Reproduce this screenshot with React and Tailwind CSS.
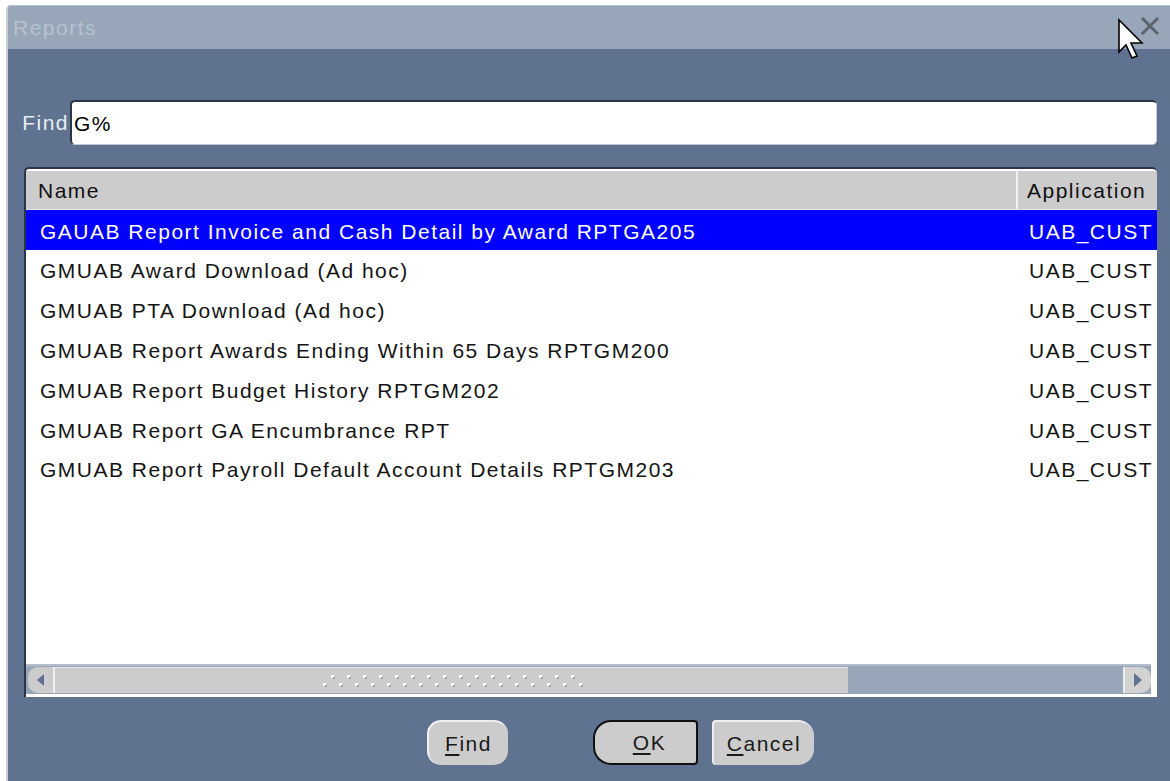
import React from "react";

const rows = [
  "GAUAB Report Invoice and Cash Detail by Award RPTGA205",
  "GMUAB Award Download (Ad hoc)",
  "GMUAB PTA Download (Ad hoc)",
  "GMUAB Report Awards Ending Within 65 Days RPTGM200",
  "GMUAB Report Budget History RPTGM202",
  "GMUAB Report GA Encumbrance RPT",
  "GMUAB Report Payroll Default Account Details RPTGM203",
];

function Grip() {
  // dotted grip drawn on the scrollbar thumb
  const top = Array.from({ length: 16 }, (_, i) => i);
  const bottom = Array.from({ length: 17 }, (_, i) => i);
  return (
    <svg width="270" height="16" viewBox="0 0 270 16">
      {top.map((i) => (
        <g key={"t" + i}>
          <rect x={8 + i * 16} y={2} width="3" height="3" fill="#ffffff" />
          <rect x={10 + i * 16} y={4} width="2" height="2" fill="#9aa3b0" />
        </g>
      ))}
      {bottom.map((i) => (
        <g key={"b" + i}>
          <rect x={0 + i * 16} y={10} width="3" height="3" fill="#ffffff" />
          <rect x={2 + i * 16} y={12} width="2" height="2" fill="#9aa3b0" />
        </g>
      ))}
    </svg>
  );
}

function Btn({ children, className = "" }) {
  return (
    <div
      className={
        "h-[45px] flex items-center justify-center bg-[#cccccc] text-[21px] tracking-[1.5px] text-[#1a1a1a] " +
        className
      }
    >
      {children}
    </div>
  );
}

export default function App() {
  return (
    <div className="relative w-[1170px] h-[781px] overflow-hidden bg-white pt-[5px] pl-[6px] font-['Liberation_Sans',Arial,sans-serif]">
      <div className="h-[776px] bg-[#5f7391] border-l-2 border-[#c9ced6] rounded-tl-[5px] flex flex-col">
        {/* title bar */}
        <div className="h-[44px] bg-[#97a6b9] border-t border-[#b6c1cf] rounded-tl-[4px] flex items-center justify-between pl-[5px] pr-[10px]">
          <span className="text-[21px] text-[#b7c2cf] tracking-[1.5px]">Reports</span>
          <svg width="20" height="20" viewBox="0 0 20 20" className="mb-[4px]">
            <path d="M3 3 L17 17 M17 3 L3 17" stroke="#5d6470" strokeWidth="3" strokeLinecap="square" />
          </svg>
        </div>

        {/* find field */}
        <div className="flex items-center mt-[51px] pr-[13px]">
          <span className="w-[62px] pr-[1px] text-right text-[21px] tracking-[1.5px] text-[#e9edf2]">Find</span>
          <div className="flex-1 h-[45px] bg-white rounded-[5px] border-t-2 border-l-2 border-[#2b3547] border-b border-r border-b-[#c3cad5] border-r-[#c3cad5] flex items-center pl-[2px] pt-[2px] text-[21px] tracking-[1.5px] text-black">
            G%
          </div>
        </div>

        {/* result table */}
        <div className="mt-[22px] ml-[16px] mr-[13px] h-[530px] rounded-t-[5px] border-t-2 border-l-2 border-[#2b3547] bg-white flex flex-col overflow-hidden">
          <div className="flex h-[39px] mt-[2px] bg-[#cccccc] text-[21px] tracking-[1.5px] text-[#111] border-b border-[#e6e6e6]">
            <div className="w-[992px] border-r-2 border-[#f2f2f2] flex items-center pl-[12px] pt-[2px]">Name</div>
            <div className="flex-1 flex items-center pl-[9px] pt-[2px] whitespace-nowrap overflow-hidden">Application</div>
          </div>
          <div className="flex-1 flex flex-col">
            {rows.map((r, i) => (
              <div
                key={r}
                className={
                  "flex h-[39.8px] text-[21px] tracking-[1.5px] items-center pt-[3px] " +
                  (i === 0 ? "bg-[#0000ff] text-white" : "text-[#141414]")
                }
              >
                <div className="w-[994px] pl-[14px] whitespace-nowrap">{r}</div>
                <div className="flex-1 pl-[9px] whitespace-nowrap overflow-hidden">UAB_CUST</div>
              </div>
            ))}
          </div>
          {/* horizontal scrollbar */}
          <div className="h-[30px] mr-[6px] border-t-2 border-[#b4becb] bg-[#97a6b9] flex items-center mb-[3px]">
            <div className="w-[27px] h-[26px] ml-[2px] bg-[#cccccc] rounded-l-[10px] border-r-2 border-[#f0f0f0] flex items-center justify-center">
              <svg width="10" height="12" viewBox="0 0 10 12">
                <path d="M8 0 L1 6 L8 12 Z" fill="#5f7391" />
              </svg>
            </div>
            <div className="w-[793px] h-[26px] bg-[#cccccc] border-t border-[#e8e8e8] flex items-center justify-center pl-[12px]">
              <Grip />
            </div>
            <div className="flex-1" />
            <div className="w-[28px] h-[26px] bg-[#d2d2d2] rounded-r-[10px] border-l-2 border-[#eeeeee] flex items-center justify-center">
              <svg width="10" height="14" viewBox="0 0 10 14">
                <path d="M1 0 L9 7 L1 14 Z" fill="#5f7391" />
              </svg>
            </div>
          </div>
        </div>

        {/* buttons */}
        <div className="flex items-center mt-[23px] pl-[419px]">
          <Btn className="w-[81px] rounded-[14px] border-t-2 border-l-2 border-[#f0f0f0]">
            <span><span className="underline underline-offset-[3px]">F</span>ind</span>
          </Btn>
          <Btn className="w-[105px] ml-[85px] border-2 border-[#111] rounded-l-[18px] rounded-r-[4px] pl-[8px]">
            <span><span className="underline underline-offset-[3px]">O</span>K</span>
          </Btn>
          <Btn className="w-[102px] ml-[14px] rounded-l-[4px] rounded-r-[16px] border-t-2 border-l-2 border-[#f0f0f0]">
            <span><span className="underline underline-offset-[3px]">C</span>ancel</span>
          </Btn>
        </div>
      </div>

      {/* mouse pointer over the title bar */}
      <svg className="absolute left-[1117px] top-[18px]" width="28" height="44" viewBox="0 0 28 44">
        <path
          d="M2 2 L2 34 L9 27 L15 40 L20 38 L14 25 L25 25 Z"
          fill="#ffffff"
          stroke="#000000"
          strokeWidth="1.6"
          strokeLinejoin="miter"
        />
      </svg>
    </div>
  );
}
